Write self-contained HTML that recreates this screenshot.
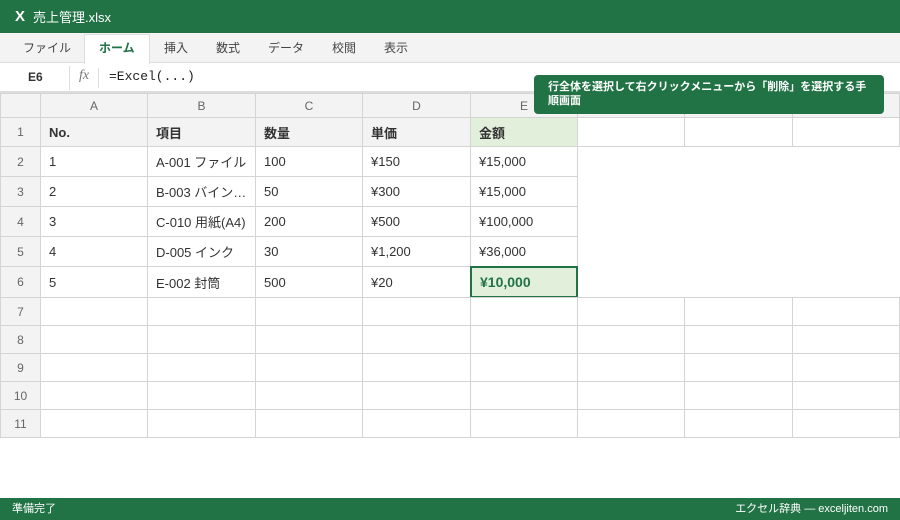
<!DOCTYPE html><html><head><meta charset="utf-8"><style>
*{margin:0;padding:0;box-sizing:border-box}
body{width:900px;height:520px;position:relative;overflow:hidden;background:#fff;font-family:"Liberation Sans","Noto Sans CJK JP",sans-serif;color:#333}
.a{position:absolute}
.c{position:absolute;border-right:1px solid #d4d4d4;border-bottom:1px solid #d4d4d4;font-size:13px;padding-left:8px;display:flex;align-items:center;white-space:nowrap;overflow:hidden}
.h{background:#f3f3f3;color:#666;justify-content:center;padding:0;font-size:12px}
.b{font-weight:bold;background:#f3f3f3}
.t{position:absolute;white-space:nowrap}
</style></head><body>
<div class="a" style="left:0;top:0;width:900px;height:33px;background:#217346;color:#fff;font-size:13px;display:flex;align-items:center;padding-left:15px"><b style="font-size:15px;margin-right:8px">X</b>売上管理.xlsx</div>
<div class="a" style="left:0;top:33px;width:900px;height:30px;background:#f3f3f3;border-bottom:1px solid #ddd"></div>
<div class="a" style="left:84px;top:34px;width:66px;height:30px;background:#fff;border:1px solid #ddd;border-bottom:none"></div>
<div class="a" style="top:33px;height:30px;left:0;width:900px;font-size:12px;color:#444;line-height:30px">
<span class="t" style="left:23px">ファイル</span><span class="t" style="left:99px;color:#217346;font-weight:bold">ホーム</span><span class="t" style="left:164px">挿入</span><span class="t" style="left:216px">数式</span><span class="t" style="left:268px">データ</span><span class="t" style="left:332px">校閲</span><span class="t" style="left:384px">表示</span></div>
<div class="a" style="left:0;top:63px;width:900px;height:30px;border-bottom:2px solid #ddd"></div>
<div class="a" style="left:28px;top:70px;font-size:12px;font-weight:bold;color:#333">E6</div>
<div class="a" style="left:69px;top:66px;width:1px;height:24px;background:#ddd"></div>
<div class="a" style="left:79px;top:68px;font-size:14px;font-style:italic;color:#777;font-family:'Liberation Serif',serif">fx</div>
<div class="a" style="left:98px;top:68px;width:1px;height:20px;background:#ddd"></div>
<div class="a" style="left:109px;top:69px;font-size:13px;font-family:'Liberation Mono',monospace;color:#222;white-space:nowrap">=Excel(...)</div>
<div class="a" style="left:0;top:93px;width:900px;height:1px;background:#d4d4d4"></div>
<div class="a" style="left:0;top:93px;width:1px;height:345px;background:#d4d4d4"></div>

<div class="c h" style="left:1px;top:94px;width:40px;height:24px"></div>
<div class="c h" style="left:41px;top:94px;width:107px;height:24px">A</div>
<div class="c h" style="left:148px;top:94px;width:108px;height:24px">B</div>
<div class="c h" style="left:256px;top:94px;width:107px;height:24px">C</div>
<div class="c h" style="left:363px;top:94px;width:108px;height:24px">D</div>
<div class="c h" style="left:471px;top:94px;width:107px;height:24px">E</div>
<div class="c h" style="left:578px;top:94px;width:107px;height:24px">F</div>
<div class="c h" style="left:685px;top:94px;width:108px;height:24px">G</div>
<div class="c h" style="left:793px;top:94px;width:107px;height:24px">H</div>
<div class="c h" style="left:1px;top:118px;width:40px;height:29px">1</div>
<div class="c b" style="left:41px;top:118px;width:107px;height:29px">No.</div>
<div class="c b" style="left:148px;top:118px;width:108px;height:29px">項目</div>
<div class="c b" style="left:256px;top:118px;width:107px;height:29px">数量</div>
<div class="c b" style="left:363px;top:118px;width:108px;height:29px">単価</div>
<div class="c b" style="left:471px;top:118px;width:107px;height:29px;background:#e2efda">金額</div>
<div class="c" style="left:578px;top:118px;width:107px;height:29px"></div>
<div class="c" style="left:685px;top:118px;width:108px;height:29px"></div>
<div class="c" style="left:793px;top:118px;width:107px;height:29px"></div>
<div class="c h" style="left:1px;top:147px;width:40px;height:30px">2</div>
<div class="c" style="left:41px;top:147px;width:107px;height:30px">1</div>
<div class="c" style="left:148px;top:147px;width:108px;height:30px">A-001 ファイル</div>
<div class="c" style="left:256px;top:147px;width:107px;height:30px">100</div>
<div class="c" style="left:363px;top:147px;width:108px;height:30px">¥150</div>
<div class="c" style="left:471px;top:147px;width:107px;height:30px">¥15,000</div>
<div class="c h" style="left:1px;top:177px;width:40px;height:30px">3</div>
<div class="c" style="left:41px;top:177px;width:107px;height:30px">2</div>
<div class="c" style="left:148px;top:177px;width:108px;height:30px">B-003 バイン…</div>
<div class="c" style="left:256px;top:177px;width:107px;height:30px">50</div>
<div class="c" style="left:363px;top:177px;width:108px;height:30px">¥300</div>
<div class="c" style="left:471px;top:177px;width:107px;height:30px">¥15,000</div>
<div class="c h" style="left:1px;top:207px;width:40px;height:30px">4</div>
<div class="c" style="left:41px;top:207px;width:107px;height:30px">3</div>
<div class="c" style="left:148px;top:207px;width:108px;height:30px">C-010 用紙(A4)</div>
<div class="c" style="left:256px;top:207px;width:107px;height:30px">200</div>
<div class="c" style="left:363px;top:207px;width:108px;height:30px">¥500</div>
<div class="c" style="left:471px;top:207px;width:107px;height:30px">¥100,000</div>
<div class="c h" style="left:1px;top:237px;width:40px;height:30px">5</div>
<div class="c" style="left:41px;top:237px;width:107px;height:30px">4</div>
<div class="c" style="left:148px;top:237px;width:108px;height:30px">D-005 インク</div>
<div class="c" style="left:256px;top:237px;width:107px;height:30px">30</div>
<div class="c" style="left:363px;top:237px;width:108px;height:30px">¥1,200</div>
<div class="c" style="left:471px;top:237px;width:107px;height:30px">¥36,000</div>
<div class="c h" style="left:1px;top:267px;width:40px;height:31px">6</div>
<div class="c" style="left:41px;top:267px;width:107px;height:31px">5</div>
<div class="c" style="left:148px;top:267px;width:108px;height:31px">E-002 封筒</div>
<div class="c" style="left:256px;top:267px;width:107px;height:31px">500</div>
<div class="c" style="left:363px;top:267px;width:108px;height:31px">¥20</div>
<div class="c" style="left:470px;top:266px;width:108px;height:32px;border:2px solid #217346;background:#e2efda;color:#217346;font-weight:bold;font-size:14px">¥10,000</div>
<div class="c h" style="left:1px;top:298px;width:40px;height:28px">7</div>
<div class="c h" style="left:1px;top:326px;width:40px;height:28px">8</div>
<div class="c h" style="left:1px;top:354px;width:40px;height:28px">9</div>
<div class="c h" style="left:1px;top:382px;width:40px;height:28px">10</div>
<div class="c h" style="left:1px;top:410px;width:40px;height:28px">11</div>
<div class="a" style="left:41px;top:298px;width:859px;height:140px;background-image:linear-gradient(to bottom,transparent 27px,#d4d4d4 27px,#d4d4d4 28px);background-size:100% 28px"></div>
<div class="a" style="left:147px;top:297px;width:1px;height:141px;background:#d4d4d4"></div>
<div class="a" style="left:255px;top:297px;width:1px;height:141px;background:#d4d4d4"></div>
<div class="a" style="left:362px;top:297px;width:1px;height:141px;background:#d4d4d4"></div>
<div class="a" style="left:470px;top:297px;width:1px;height:141px;background:#d4d4d4"></div>
<div class="a" style="left:577px;top:297px;width:1px;height:141px;background:#d4d4d4"></div>
<div class="a" style="left:684px;top:297px;width:1px;height:141px;background:#d4d4d4"></div>
<div class="a" style="left:792px;top:297px;width:1px;height:141px;background:#d4d4d4"></div>
<div class="a" style="left:899px;top:297px;width:1px;height:141px;background:#d4d4d4"></div>
<div class="a" style="left:41px;top:297px;width:859px;height:1px;background:#d4d4d4"></div>
<div class="a" style="left:534px;top:75px;width:350px;height:39px;background:#217346;border-radius:4px;color:#fff;font-size:11px;font-weight:bold;line-height:14px;padding:5px 14px">行全体を選択して右クリックメニューから「削除」を選択する手順画面</div>
<div class="a" style="left:0;top:498px;width:900px;height:22px;background:#217346;color:#fff;font-size:11px;line-height:22px;padding:0 12px;display:flex;justify-content:space-between"><span>準備完了</span><span>エクセル辞典 — exceljiten.com</span></div>
</body></html>
